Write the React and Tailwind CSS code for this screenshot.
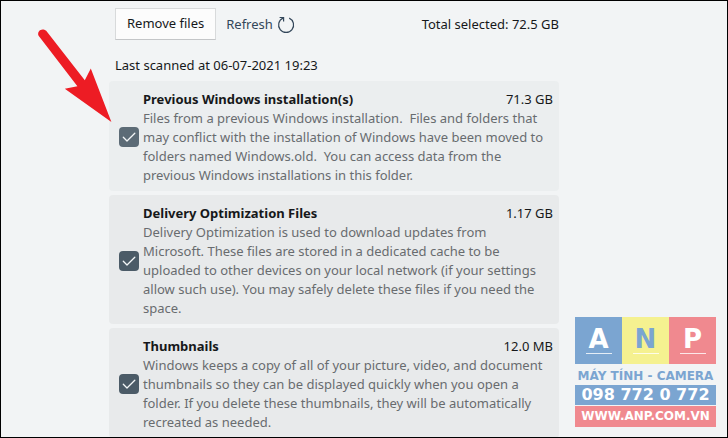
import { useState } from 'react';

const categories = [
  {
    id: 'previous-windows',
    name: 'Previous Windows installation(s)',
    size: '71.3 GB',
    card: 'bg-[#ebeeef]',
    box: 'bg-[#5c6b76]',
    lines: [
      'Files from a previous Windows installation.  Files and folders that',
      'may conflict with the installation of Windows have been moved to',
      'folders named Windows.old.  You can access data from the',
      'previous Windows installations in this folder.',
    ],
  },
  {
    id: 'delivery-optimization',
    name: 'Delivery Optimization Files',
    size: '1.17 GB',
    card: 'bg-[#e8eaeb]',
    box: 'bg-[#4b5b67]',
    lines: [
      'Delivery Optimization is used to download updates from',
      'Microsoft. These files are stored in a dedicated cache to be',
      'uploaded to other devices on your local network (if your settings',
      'allow such use). You may safely delete these files if you need the',
      'space.',
    ],
  },
  {
    id: 'thumbnails',
    name: 'Thumbnails',
    size: '12.0 MB',
    card: 'bg-[#e8eaeb]',
    box: 'bg-[#4b5b67]',
    lines: [
      'Windows keeps a copy of all of your picture, video, and document',
      'thumbnails so they can be displayed quickly when you open a',
      'folder. If you delete these thumbnails, they will be automatically',
      'recreated as needed.',
    ],
  },
];

const CategoryCard = ({ item }) => {
  const [checked, setChecked] = useState(true);

  return (
    <li className={`flex items-center gap-1 rounded pl-2.5 pr-1.5 pt-2 pb-1.5 ${item.card}`}>
      <span className="relative h-5 w-5 shrink-0">
        <input
          id={item.id}
          type="checkbox"
          checked={checked}
          onChange={(e) => setChecked(e.target.checked)}
          className={`block h-5 w-5 appearance-none rounded ${checked ? item.box : 'border border-gray-500 bg-white'}`}
        />
        {checked && (
          <svg className="pointer-events-none absolute inset-0 h-5 w-5" fill="none" viewBox="0 0 20 20" stroke="#f4f7f8">
            <path strokeLinecap="round" strokeLinejoin="round" strokeWidth={1.3} d="M4.3 10.3l3.7 3.7 7.8-7.8" />
          </svg>
        )}
      </span>
      <div className="min-w-0 flex-1">
        <div className="flex justify-between text-[13px] leading-5 text-[#16181a]">
          <label htmlFor={item.id} className="font-bold">{item.name}</label>
          <span>{item.size}</span>
        </div>
        <p className="whitespace-pre text-[13px] leading-[19px] text-[#686c6f]">{item.lines.join('\n')}</p>
      </div>
    </li>
  );
};

const Arrow = () => (
  <svg className="pointer-events-none absolute left-0 top-0 h-[130px] w-[120px]" viewBox="0 0 120 130" fill="#ed1c24">
    <path d="M37.6 34.8C35.6 30 41 26.2 45.2 29.8L83.8 79.2 89.8 67.6 110.4 121 63.8 87.8 76.4 85.2z" />
  </svg>
);

const Tile = ({ letter, color }) => (
  <div className={`flex h-[47px] flex-1 flex-col items-center ${color}`}>
    <span className="pt-2 text-[26px] leading-7 font-bold">{letter}</span>
    <span className="h-px w-[26px] bg-white/80" />
  </div>
);

const Watermark = () => (
  <div className="absolute bottom-2.5 right-[11px] w-[141px] text-center font-['DejaVu_Sans',sans-serif] whitespace-nowrap">
    <div className="flex">
      <Tile letter="A" color="bg-[#7ba5d1] text-white" />
      <Tile letter="N" color="bg-[#f5f190] text-[#7ba5d1]" />
      <Tile letter="P" color="bg-[#f0898f] text-white" />
    </div>
    <p className="pt-1 text-[12px] leading-[17px] font-bold text-[#7ba5d1]">MÁY TÍNH - CAMERA</p>
    <p className="bg-[#7ba5d1] text-[16px] leading-5 font-bold text-white">098 772 0 772</p>
    <p className="mt-px bg-[#f0898f] text-[12px] leading-[21px] font-bold text-white">WWW.ANP.COM.VN</p>
  </div>
);

const App = () => {
  return (
    <div className="relative h-screen overflow-hidden border border-black bg-[#f2f4f5] font-['Noto_Sans',sans-serif] text-[13px] text-[#16181a]">
      <main className="pl-[108px] pr-[168px] pt-[7px]">
        {/* Toolbar */}
        <div className="flex items-center pl-1.5">
          <button type="button" className="h-8 border border-[#d8dadb] border-b-[#c4c6c8] bg-[#fcfcfc] px-[11px]">
            Remove files
          </button>
          <div className="flex flex-1 items-center justify-between pl-2.5 pt-0.5">
            <button type="button" className="flex items-center gap-1 text-[#34475a]">
              Refresh
              <svg className="h-[18px] w-[18px]" fill="none" viewBox="0 0 18 18" stroke="currentColor" strokeWidth={1.2}>
                <path d="M12.2 2.1A7.5 7.5 0 1 1 6 2.1M2.6 1.5h4v4" />
              </svg>
            </button>
            <span>Total selected: 72.5 GB</span>
          </div>
        </div>

        <p className="pl-1.5 pt-[15px] leading-5">Last scanned at 06-07-2021 19:23</p>

        {/* Cleanup categories */}
        <ul className="mt-1.5 flex flex-col gap-1">
          {categories.map((item) => (
            <CategoryCard key={item.id} item={item} />
          ))}
        </ul>
      </main>

      <Arrow />
      <Watermark />
    </div>
  );
};

export default App;
